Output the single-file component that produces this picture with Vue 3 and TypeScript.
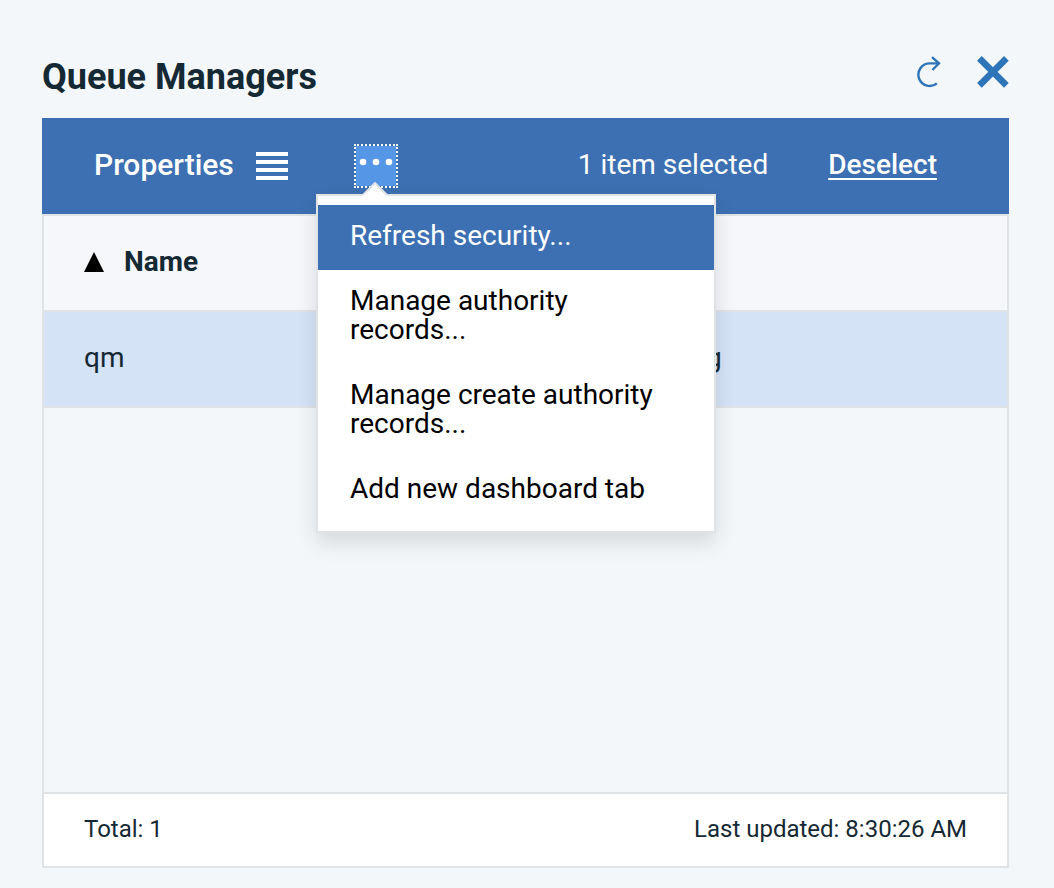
<script setup lang="ts">
import { ref } from 'vue'

interface QueueManager {
  name: string
  status: string
}

const rows = ref<QueueManager[]>([{ name: 'qm', status: 'Running' }])
const actions: string[] = [
  'Refresh security...',
  'Manage authority records...',
  'Manage create authority records...',
  'Add new dashboard tab',
]
const active = ref(0)
const menuOpen = ref(true)
const updated = '8:30:26 AM'
</script>

<template>
  <main class="widget">
    <header class="head">
      <h1>Queue Managers</h1>
      <div class="tools">
        <button type="button" class="icon" aria-label="Refresh">
          <svg width="26" height="32" viewBox="0 0 26 32" fill="none" stroke="currentColor" stroke-width="2.4">
            <path d="M20.9 27.4A11.3 11.3 0 1 1 13.2 7.4H23" />
            <path d="M16 1.2L23 7.4L16.4 14" />
          </svg>
        </button>
        <button type="button" class="icon" aria-label="Close">
          <svg width="32" height="32" viewBox="0 0 32 32" fill="none" stroke="currentColor" stroke-width="6.6">
            <path d="M2.4 2.4L29.4 29.4M29.4 2.4L2.4 29.4" />
          </svg>
        </button>
      </div>
    </header>

    <div class="toolbar">
      <button type="button" class="properties">
        <span>Properties</span>
        <svg width="32" height="28" viewBox="0 0 32 28" fill="currentColor" aria-hidden="true">
          <path d="M0 0H32V4H0zM0 8H32V12H0zM0 16H32V20H0zM0 24H32V28H0z" />
        </svg>
      </button>
      <div class="more-wrap">
        <button type="button" class="more" aria-label="More actions" :aria-expanded="menuOpen" @click="menuOpen = !menuOpen">
          <svg width="34" height="8" viewBox="0 0 34 8" fill="currentColor">
            <circle cx="4" cy="4" r="3.3" />
            <circle cx="17" cy="4" r="3.3" />
            <circle cx="30" cy="4" r="3.3" />
          </svg>
        </button>
        <div v-if="menuOpen" class="menu" role="menu">
          <svg class="arrow" width="28" height="14" viewBox="0 0 28 14" aria-hidden="true">
            <path d="M1 14L14 1L27 14z" fill="#fff" />
            <path d="M2 13L14 1L26 13" fill="none" stroke="#dfe3e6" stroke-width="2" />
          </svg>
          <button
            v-for="(action, i) in actions"
            :key="action"
            type="button"
            role="menuitem"
            :class="{ active: i === active }"
            @mouseenter="active = i"
          >{{ action }}</button>
        </div>
      </div>
      <span class="selected">{{ rows.length }} item selected</span>
      <a href="#" class="deselect" @click.prevent>Deselect</a>
    </div>

    <section class="panel">
      <table>
        <thead>
          <tr>
            <th scope="col" aria-sort="ascending">
              <span class="sort">
                <svg width="20" height="20" viewBox="0 0 20 20" aria-hidden="true"><path d="M10 0L20 20H0z" /></svg>
                Name
              </span>
            </th>
            <th scope="col">Status</th>
          </tr>
        </thead>
        <tbody>
          <tr v-for="row in rows" :key="row.name">
            <td>{{ row.name }}</td>
            <td>{{ row.status }}</td>
          </tr>
        </tbody>
      </table>
      <footer class="foot">
        <span>Total: {{ rows.length }}</span>
        <span>Last updated: {{ updated }}</span>
      </footer>
    </section>
  </main>
</template>

<style>
body {
  margin: 0;
  background: #f3f7fa;
}
</style>

<style scoped>
.widget {
  box-sizing: border-box;
  min-height: 100vh;
  padding: 56px 45px 20px 42px;
  display: flex;
  flex-direction: column;
  color: #152934;
  font-family: Roboto, "Liberation Sans", sans-serif;
  font-size: 28px;
  line-height: 36px;
}
button {
  padding: 0;
  border: 0;
  background: none;
  color: inherit;
  font: inherit;
  cursor: pointer;
}
svg {
  display: block;
}
.head {
  display: flex;
  justify-content: space-between;
  align-items: flex-start;
  padding-bottom: 20px;
}
h1 {
  margin: 0;
  font-size: 36px;
  line-height: 42px;
  font-weight: 700;
}
.tools {
  display: flex;
  gap: 35px;
}
.icon {
  color: #2d74b9;
}
.toolbar {
  display: flex;
  align-items: center;
  height: 96px;
  padding: 0 72px 0 52px;
  background: #3d70b2;
  color: #fff;
}
.properties {
  display: flex;
  align-items: center;
  justify-content: space-between;
  min-width: 194px;
  margin-right: 66px;
  font-size: 30px;
  font-weight: 500;
}
.properties span,
.selected,
.deselect {
  padding-bottom: 2px;
}
.more-wrap {
  position: relative;
}
.more {
  display: flex;
  justify-content: center;
  box-sizing: border-box;
  width: 44px;
  height: 44px;
  padding-top: 12px;
  border: 2px dotted #fff;
  background: #5596e6 padding-box;
}
.menu {
  position: absolute;
  z-index: 1;
  top: 50px;
  left: -38px;
  box-sizing: border-box;
  width: 400px;
  padding: 9px 0 8px;
  border: 2px solid #dfe3e6;
  background: #fff;
  box-shadow: 0 10px 20px rgba(0, 0, 0, 0.12);
  color: #000;
}
.arrow {
  position: absolute;
  top: -14px;
  left: 43px;
}
.menu button {
  display: block;
  width: 100%;
  padding: 16px 32px 20px;
  line-height: 29px;
  text-align: left;
}
.menu .active {
  background: #3d70b2;
  color: #fff;
}
.selected {
  margin-left: auto;
}
.deselect {
  margin-left: 60px;
  color: inherit;
  font-weight: 500;
  text-decoration-thickness: 2px;
  text-underline-offset: 4px;
}
.panel {
  flex: 1;
  display: flex;
  flex-direction: column;
  border: 2px solid #dfe3e6;
}
table {
  width: 100%;
  border-collapse: separate;
  border-spacing: 0;
  table-layout: fixed;
}
th,
td {
  box-sizing: border-box;
  height: 96px;
  padding: 0 40px 2px;
  border-bottom: 2px solid #dfe3e6;
  text-align: left;
}
th:first-child {
  width: 536px;
}
th {
  background: #f5f7fb;
  font-weight: 700;
}
td {
  background: #d4e3f6;
}
.sort {
  display: flex;
  align-items: center;
  gap: 20px;
}
.foot {
  box-sizing: border-box;
  display: flex;
  justify-content: space-between;
  align-items: center;
  height: 74px;
  margin-top: auto;
  padding: 0 40px 2px;
  border-top: 2px solid #dfe3e6;
  background: #fff;
  font-size: 24px;
}
</style>
